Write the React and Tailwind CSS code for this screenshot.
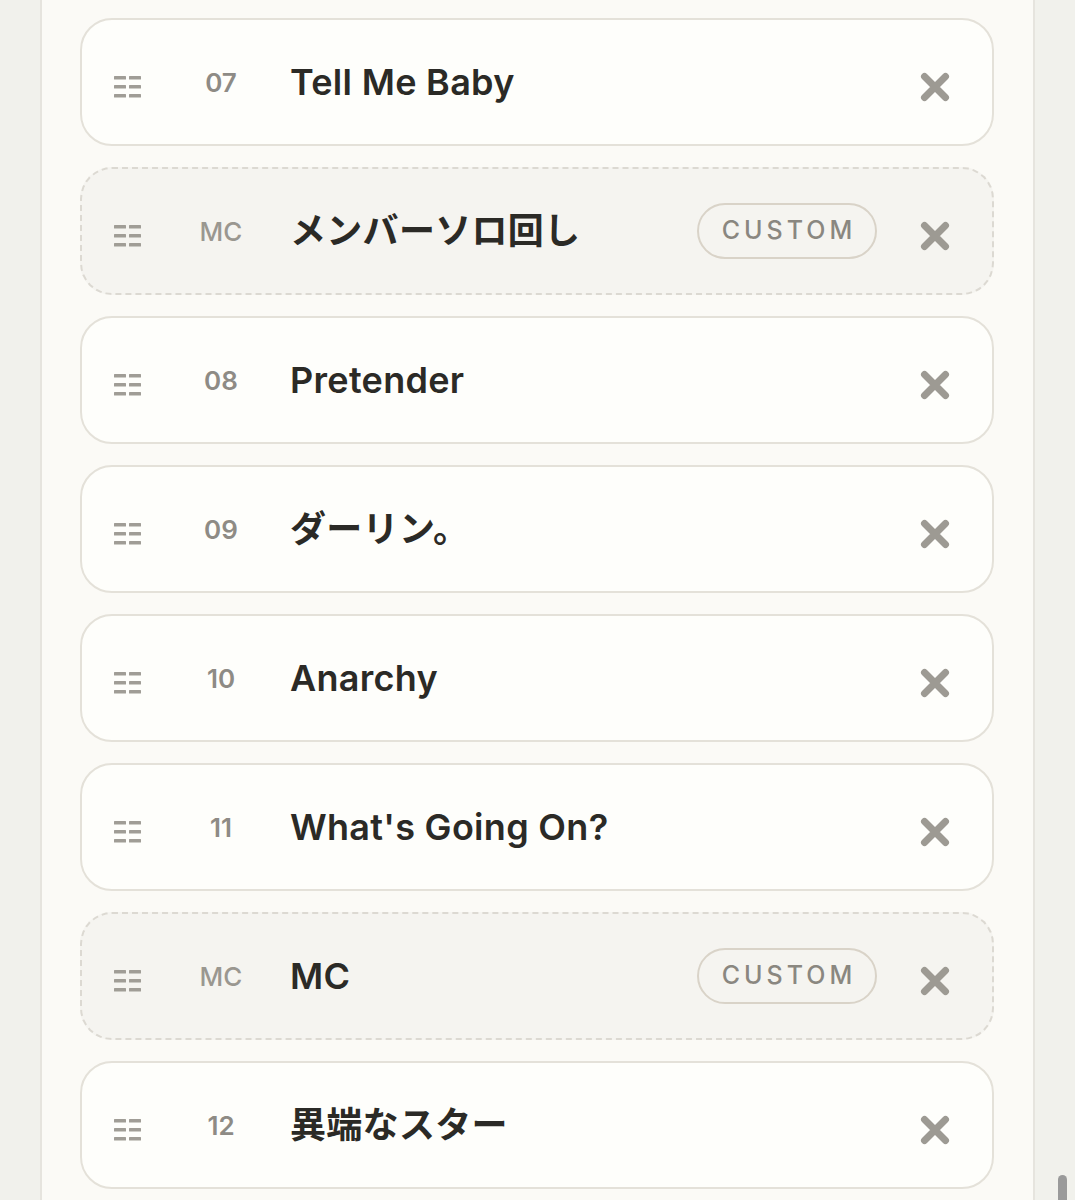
import React from 'react';

const rows = [
  { no: '07', title: 'Tell Me Baby' },
  { no: 'MC', title: 'メンバーソロ回し', custom: true },
  { no: '08', title: 'Pretender' },
  { no: '09', title: 'ダーリン。' },
  { no: '10', title: 'Anarchy' },
  { no: '11', title: "What's Going On?" },
  { no: 'MC', title: 'MC', custom: true },
  { no: '12', title: '異端なスター' },
];

function DragHandle() {
  return (
    <svg width="28" height="24" viewBox="0 0 28 24" className="mt-[10px]">
      {[0, 9, 18].map((y) => (
        <g key={y} fill="#a09d96">
          <rect x="0" y={y + 1} width="12" height="3.5" rx="0.5" />
          <rect x="15" y={y + 1} width="12" height="3.5" rx="0.5" />
        </g>
      ))}
    </svg>
  );
}

function RemoveIcon() {
  return (
    <svg width="30" height="30" viewBox="0 0 30 30" className="mt-[10px]">
      <path d="M4.5 4.5 L25.5 25.5 M25.5 4.5 L4.5 25.5" stroke="#9d9a93" strokeWidth="7" strokeLinecap="round" />
    </svg>
  );
}

function Row({ row }) {
  return (
    <div
      className={
        'flex items-center h-[128px] pl-[32px] pr-[42px] rounded-[32px] border-2 ' +
        (row.custom ? 'bg-[#f5f4f0] border-dashed border-[#dcd9d2]' : 'bg-[#fefefb] border-[#e4e1d9]')
      }
    >
      <DragHandle />
      <div
        className={
          'w-[82px] ml-[38px] text-center text-[26px] ' +
          (row.custom ? 'font-medium text-[#9a9790]' : 'font-semibold text-[#8e8b85]')
        }
      >
        {row.no}
      </div>
      <div className="ml-[28px] flex-1 text-[36px] font-semibold text-[#2b2a26] tracking-[0.3px]">{row.title}</div>
      {row.custom && (
        <div className="mr-[43px] w-[180px] h-[56px] rounded-full border-2 border-[#d9d3c8] flex items-center justify-center text-[25px] font-medium tracking-[0.16em] text-[#8a8780] pl-[4px]">
          CUSTOM
        </div>
      )}
      <RemoveIcon />
    </div>
  );
}

export default function App() {
  return (
    <div
      className="min-h-[1200px] bg-[#f1f1ec] flex overflow-hidden relative"
      style={{ fontFamily: 'Inter, "Noto Sans CJK JP", sans-serif' }}
    >
      <div className="ml-[40px] w-[995px] bg-[#fbfaf6] border-l-2 border-r-2 border-[#e6e4de] pt-[18px] pl-[38px] pr-[39px] flex flex-col gap-[21px] h-[1200px]">
        {rows.map((r, i) => (
          <Row key={i} row={r} />
        ))}
      </div>
      <div className="absolute left-[1058px] top-[1175px] w-[9px] h-[40px] rounded-full bg-[#9a9a9a]" />
    </div>
  );
}
